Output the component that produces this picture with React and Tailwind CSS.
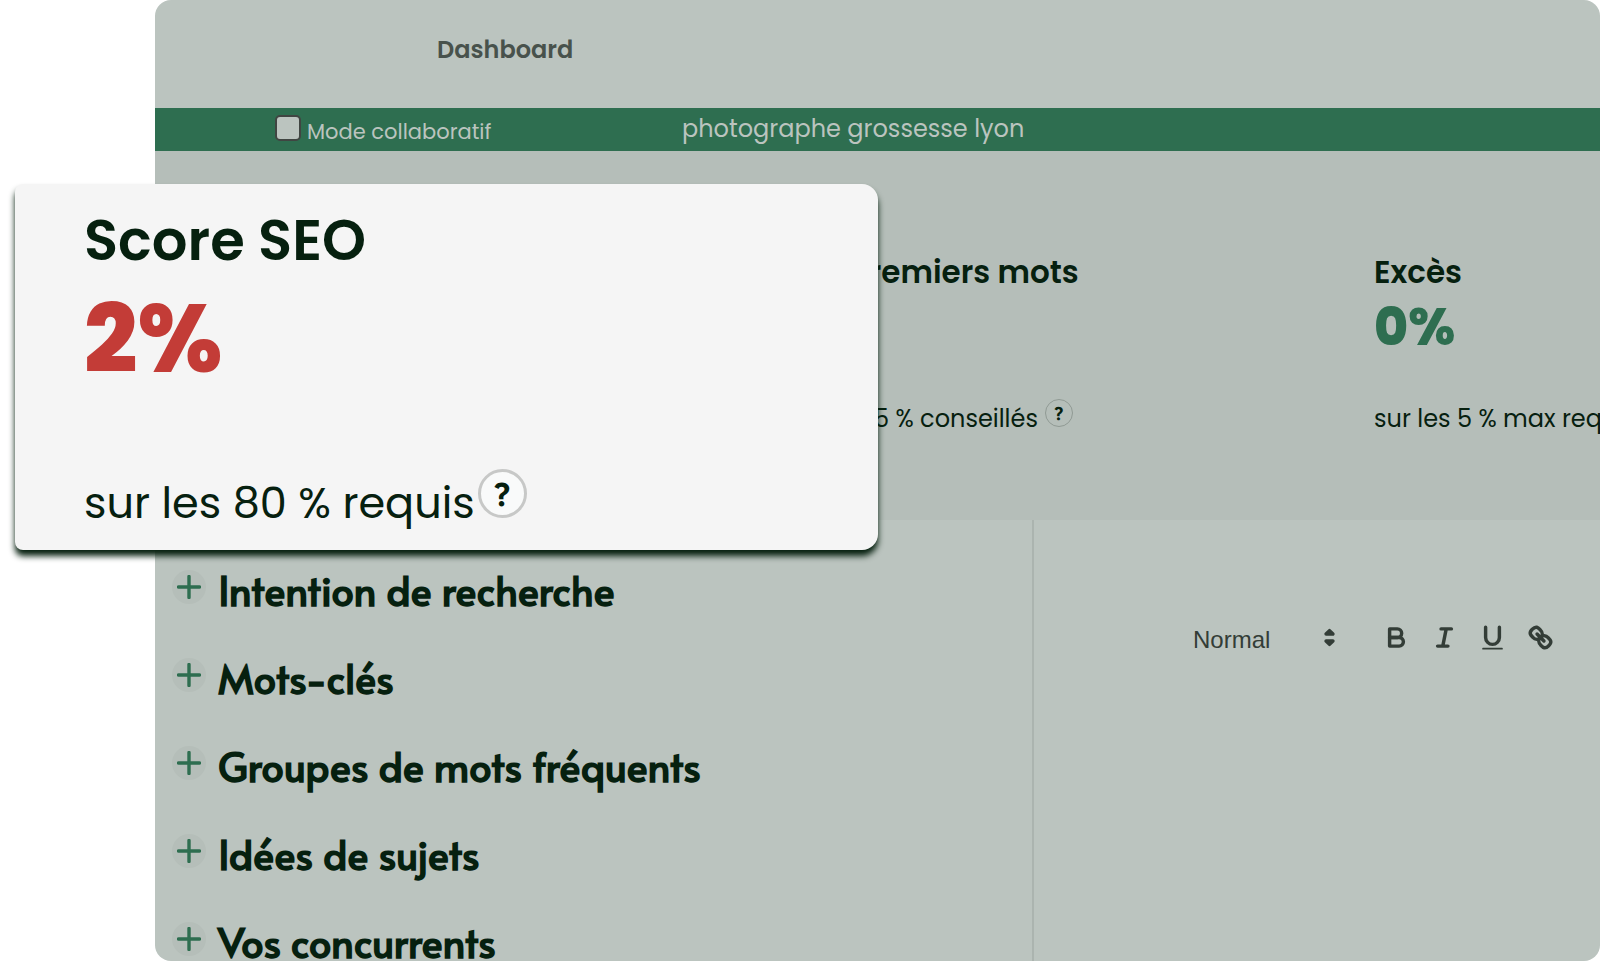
import React from "react";

const sections = [
  "Intention de recherche",
  "Mots-clés",
  "Groupes de mots fréquents",
  "Idées de sujets",
  "Vos concurrents",
];

function Header() {
  return (
    <header className="flex h-[108px] items-center pl-[282px] pb-2">
      <a href="#dashboard" className="text-[24px] leading-8 font-semibold text-[#48524c]">
        Dashboard
      </a>
    </header>
  );
}

function KeywordBar() {
  return (
    <div className="flex h-[43px] items-center bg-[#2e6e50] text-[#bbc4bf]">
      <div className="flex w-[527px] items-center gap-[6px] pl-[120px]">
        <input
          id="collab"
          type="checkbox"
          className="mb-1 size-[26px] appearance-none rounded-[5px] border-2 border-[#404542] bg-[#bbc4bf] checked:bg-[#48524c]"
        />
        <label htmlFor="collab" className="pt-1 text-[21px] leading-7">
          Mode collaboratif
        </label>
      </div>
      <span className="pb-0.5 text-[24px] leading-8">photographe grossesse lyon</span>
    </div>
  );
}

function Help() {
  return (
    <button
      type="button"
      aria-label="Aide"
      className="mb-3 size-7 shrink-0 rounded-full border border-[#909a94] font-[Alata,Lato,sans-serif] text-[17px] leading-6 font-bold"
    >
      ?
    </button>
  );
}

function Stats() {
  return (
    <section className="flex h-[369px] overflow-hidden bg-[#b5beb9] pt-[101px] whitespace-nowrap">
      <div className="w-[1219px] shrink-0 pl-[695px]">
        <h2 className="text-[31px] leading-10 font-semibold">Premiers mots</h2>
        <div className="h-[107px]" />
        <div className="flex items-center gap-[7px] pl-6">
          <p className="text-[24px] leading-10">5 % conseillés</p>
          <Help />
        </div>
      </div>
      <div className="shrink-0">
        <h2 className="text-[31px] leading-10 font-semibold">Excès</h2>
        <p className="h-[107px] pt-1 text-[52px] leading-[62px] font-extrabold text-[#2e6e50]">0%</p>
        <p className="text-[24px] leading-10">sur les 5 % max requis</p>
      </div>
    </section>
  );
}

function Outline() {
  return (
    <ul className="w-[879px] shrink-0 border-r-2 border-[#abb4af] pt-[45px] pl-[17px]">
      {sections.map((name) => (
        <li key={name} className="h-[88px]">
          <button type="button" className="flex items-start gap-3 text-left">
            <span className="mt-[5px] flex size-[34px] items-center justify-center rounded-full bg-[#b5beb9]">
              <svg viewBox="0 0 24 24" className="size-6" stroke="#2e6e50" strokeWidth="3.4" strokeLinecap="round">
                <path d="M12 1.5v21M1.5 12h21" />
              </svg>
            </span>
            <span className="font-[Alata,Lato,sans-serif] text-[40px] leading-[49px] font-bold">{name}</span>
          </button>
        </li>
      ))}
    </ul>
  );
}

function Tool({ label, children }) {
  return (
    <button type="button" aria-label={label} className="flex size-12 items-center justify-center">
      <svg
        viewBox="0 0 18 18"
        className="size-[31px]"
        fill="none"
        stroke="currentColor"
        strokeWidth="2"
        strokeLinecap="round"
        strokeLinejoin="round"
      >
        {children}
      </svg>
    </button>
  );
}

function Editor() {
  return (
    <section className="min-w-0 flex-1 pt-[93px] pl-[159px] text-[#333d37]">
      <div className="flex h-12 items-center">
        <div className="relative mr-6 w-[155px]">
          <select
            aria-label="Style de texte"
            className="w-full appearance-none bg-transparent pt-1.5 font-['Liberation_Sans',sans-serif] text-[24px] leading-8 font-medium"
          >
            <option>Normal</option>
            <option>Titre 1</option>
            <option>Titre 2</option>
          </select>
          <svg
            viewBox="0 0 18 18"
            className="pointer-events-none absolute top-1 right-[3px] size-[31px]"
            fill="currentColor"
            stroke="currentColor"
            strokeWidth="2"
            strokeLinejoin="round"
          >
            <polygon points="7 11 9 13 11 11 7 11" />
            <polygon points="7 7 9 5 11 7 7 7" />
          </svg>
        </div>
        <Tool label="Gras">
          <path d="M5,4H9.5A2.5,2.5,0,0,1,12,6.5v0A2.5,2.5,0,0,1,9.5,9H5V4Z" />
          <path d="M5,9h5.5A2.5,2.5,0,0,1,13,11.5v0A2.5,2.5,0,0,1,10.5,14H5V9Z" />
        </Tool>
        <Tool label="Italique">
          <path d="M7,4H13M5,14H11M8,14L10,4" />
        </Tool>
        <Tool label="Souligné">
          <path d="M5,3V9a4.012,4.012,0,0,0,4,4H9a4.012,4.012,0,0,0,4-4V3" />
          <rect x="3" y="15" width="12" height="1" rx="0.5" fill="currentColor" stroke="none" />
        </Tool>
        <Tool label="Lien">
          <path d="M7,7L11,11" />
          <path d="M8.9,4.577a3.476,3.476,0,0,1,.36,4.679A3.476,3.476,0,0,1,4.577,8.9C3.185,7.5,2.035,6.4,4.217,4.217S7.5,3.185,8.9,4.577Z" />
          <path d="M13.423,9.1a3.476,3.476,0,0,0-4.679-.36,3.476,3.476,0,0,0,.36,4.679c1.392,1.392,2.5,2.542,4.679.36S14.815,10.5,13.423,9.1Z" />
        </Tool>
      </div>
    </section>
  );
}

function ScoreCard() {
  return (
    <section className="absolute top-[184px] left-[15px] w-[863px] rounded-2xl rounded-l-lg bg-[#f5f5f5] px-[69px] pt-[21px] pb-4 shadow-[0_6px_6px_#06200f]">
      <h2 className="text-[56px] leading-[72px] font-semibold">Score SEO</h2>
      <p className="h-[164px] pt-[14px] text-[94px] leading-[96px] font-extrabold text-[#c33c37]">2%</p>
      <div className="flex items-start gap-[3px]">
        <p className="pt-8 pb-px text-[43px] leading-[60px]">sur les 80 % requis</p>
        <button
          type="button"
          aria-label="Aide"
          className="mt-7 size-[49px] rounded-full border-[3px] border-[#c7c8c7] bg-[#f9fafa] font-[Alata,Lato,sans-serif] text-[31px] leading-[42px] font-bold"
        >
          ?
        </button>
      </div>
    </section>
  );
}

export default function App() {
  return (
    <div className="relative h-screen overflow-hidden bg-white font-[Poppins,Inter,sans-serif] text-[#06200f]">
      <main className="ml-[155px] flex h-full flex-col overflow-hidden rounded-2xl bg-[#bbc4bf]">
        <Header />
        <KeywordBar />
        <Stats />
        <div className="flex min-h-0 flex-1">
          <Outline />
          <Editor />
        </div>
      </main>
      <ScoreCard />
    </div>
  );
}
